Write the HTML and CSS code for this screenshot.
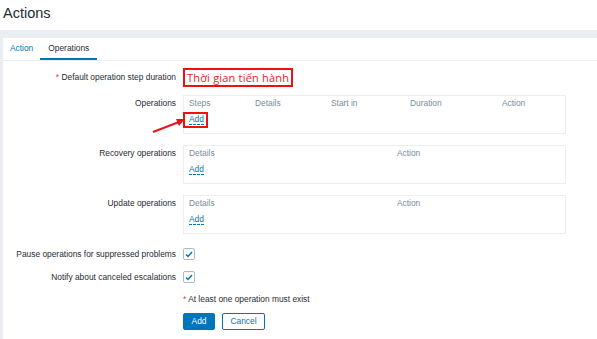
FILE: index.html
```html
<!DOCTYPE html>
<html>
<head>
<meta charset="utf-8">
<link rel="stylesheet" href="styles.css">
</head>
<body>
<header class="page-header"><h1 class="title">Actions</h1></header>
<div class="wrapper">
  <div class="panel">
    <ul class="tabs">
      <li class="tab">Action</li>
      <li class="tab active">Operations</li>
    </ul>
    <div class="form">
      <div class="label"><span class="req">*</span> Default operation step duration</div>
      <div class="value"><span class="hl-box">Thời gian tiến hành</span></div>

      <div class="label top r2">Operations</div>
      <div class="value r2">
        <div class="tbl">
          <div class="thead cols-ops"><span>Steps</span><span>Details</span><span>Start in</span><span>Duration</span><span>Action</span></div>
          <div class="tadd"><span class="link">Add</span></div>
          <span class="hl-add"></span>
          <svg class="arrow" width="40" height="20" viewBox="0 0 40 20"><line x1="2" y1="17" x2="28" y2="7" stroke="#e8141b" stroke-width="2"/><polygon points="34,4 25,4 28,11" fill="#e8141b"/></svg>
        </div>
      </div>

      <div class="label top">Recovery operations</div>
      <div class="value">
        <div class="tbl">
          <div class="thead cols-2"><span>Details</span><span>Action</span></div>
          <div class="tadd"><span class="link">Add</span></div>
        </div>
      </div>

      <div class="label top">Update operations</div>
      <div class="value">
        <div class="tbl">
          <div class="thead cols-2"><span>Details</span><span>Action</span></div>
          <div class="tadd"><span class="link">Add</span></div>
        </div>
      </div>

      <div class="label small r5">Pause operations for suppressed problems</div>
      <div class="value r5"><span class="cb"><svg width="8" height="7" viewBox="0 0 8 7"><polyline points="1,3.5 3,5.5 7,1" fill="none" stroke="#0275b8" stroke-width="1.4"/></svg></span></div>

      <div class="label small">Notify about canceled escalations</div>
      <div class="value"><span class="cb"><svg width="8" height="7" viewBox="0 0 8 7"><polyline points="1,3.5 3,5.5 7,1" fill="none" stroke="#0275b8" stroke-width="1.4"/></svg></span></div>

      <div class="label small"></div>
      <div class="note"><span class="req">*</span> At least one operation must exist</div>

      <div class="label small r8"></div>
      <div class="value r8 buttons"><span class="btn primary">Add</span><span class="btn alt">Cancel</span></div>
    </div>
  </div>
</div>
</body>
</html>
```

FILE: styles.css
```css
html, body {
  margin: 0;
  padding: 0;
  background: #fff;
  font-family: "Liberation Sans", Arial, sans-serif;
  font-size: 8.4px;
  color: #1f2c33;
}
.page-header {
  height: 30px;
  padding: 0 3px;
  box-sizing: border-box;
}
.title {
  margin: 0;
  padding-top: 4px;
  font-size: 14.5px;
  font-weight: normal;
  line-height: 18px;
  color: #1f2c33;
}
.wrapper {
  background: #ebeef0;
  padding: 8px 0 0 3px;
  height: 309px;
  box-sizing: border-box;
}
.panel {
  background: #fff;
  height: 100%;
}
.tabs {
  list-style: none;
  margin: 0;
  padding: 0;
  display: flex;
  height: 22px;
  border-bottom: 1px solid #ebeef0;
}
.tab {
  padding: 0 7px;
  line-height: 21px;
  color: #0275b8;
  border-bottom: 2px solid transparent;
}
.tab.active {
  color: #1f2c33;
  border-bottom-color: #0275b8;
  padding: 0 8px;
}
.form {
  display: grid;
  grid-template-columns: 173px 383px;
  column-gap: 7px;
  row-gap: 11px;
  padding-top: 7px;
}
.label {
  text-align: right;
  line-height: 19px;
  white-space: nowrap;
}
.label.top {
  line-height: 10px;
  padding-top: 3px;
}
.label.small {
  line-height: 12px;
}
.req { color: #e33734; }
.r2 { margin-top: -3px; }
.r5 { margin-top: 3px; }
.r8 { margin-top: -2px; }
.value { display: flex; align-items: center; }
.hl-box {
  display: inline-block;
  border: 2px solid #ee1111;
  padding: 0 2px;
  height: 15px;
  line-height: 15px;
  font-family: "Open Sans", "Noto Sans", sans-serif;
  font-size: 11px;
  color: #e8202a;
  letter-spacing: 0.2px;
}
.tbl {
  position: relative;
  width: 100%;
  border: 1px solid #ebeef0;
  padding: 2px 5px 7px;
  box-sizing: border-box;
  height: 39px;
}
.thead {
  display: grid;
  line-height: 10px;
  color: #768d99;
}
.cols-ops { grid-template-columns: 66px 76px 79px 92px auto; }
.cols-2 { grid-template-columns: 208px auto; }
.tadd {
  margin-top: 5px;
  line-height: 12px;
}
.link {
  color: #0275b8;
  border-bottom: 1px dashed #0275b8;
}
.hl-add {
  position: absolute;
  left: -1px;
  top: 16px;
  width: 21px;
  height: 12px;
  border: 2px solid #ee1111;
}
.arrow {
  position: absolute;
  left: -33px;
  top: 19px;
}
.cb {
  width: 10px;
  height: 10px;
  border: 1px solid #acbbc2;
  border-radius: 2px;
  display: flex;
  align-items: center;
  justify-content: center;
}
.note { line-height: 10px; }
.buttons { gap: 7px; }
.btn {
  display: inline-block;
  height: 17px;
  line-height: 15px;
  box-sizing: border-box;
  border: 1px solid #0275b8;
  border-radius: 2px;
  text-align: center;
}
.btn.primary {
  width: 32px;
  background: #0275b8;
  color: #fff;
}
.btn.alt {
  width: 43px;
  background: #fff;
  color: #0275b8;
}
```
